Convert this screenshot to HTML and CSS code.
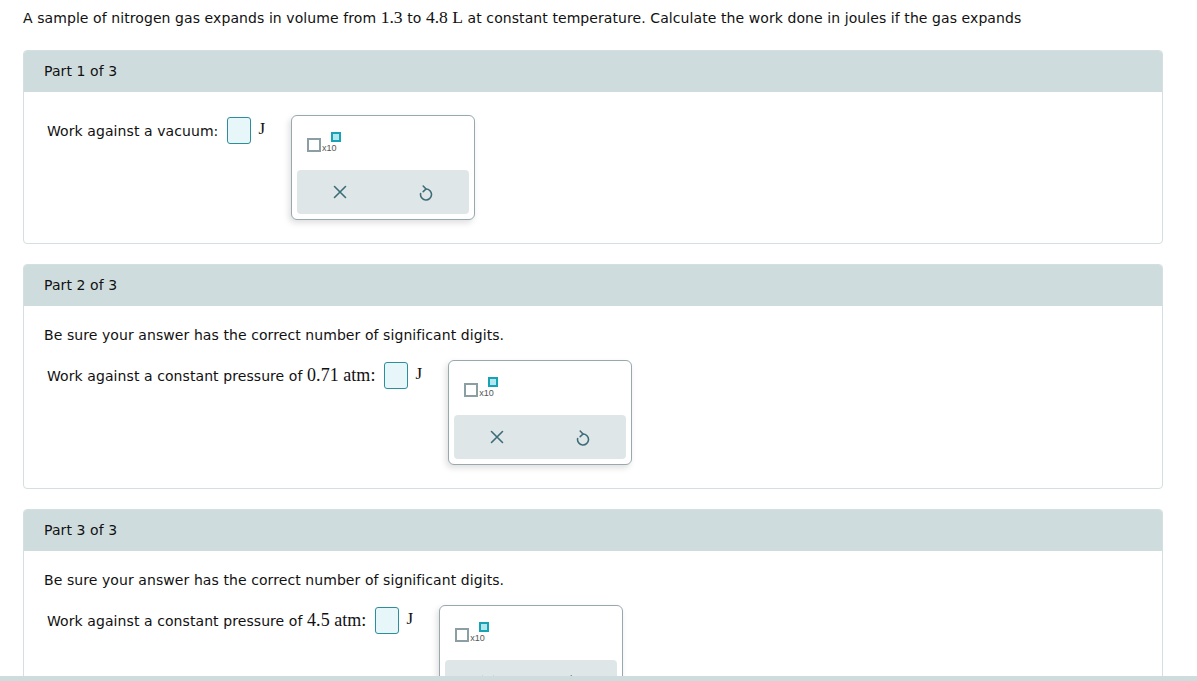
FILE: index.html
```html
<!DOCTYPE html>
<html>
<head>
<meta charset="utf-8">
<link rel="stylesheet" href="styles.css">
</head>
<body>
<div class="page">
  <p class="question">A sample of nitrogen gas expands in volume from <span class="math">1.3</span> to <span class="math">4.8 L</span> at constant temperature. Calculate the work done in joules if the gas expands</p>

  <section class="card">
    <div class="card-head">Part 1 of 3</div>
    <div class="card-body">
      <div class="row">
        <span class="label">Work against a vacuum:</span>
        <span class="answer"></span>
        <span class="unit">J</span>
        <div class="popup">
          <div class="tools">
            <span class="sci"><span class="sci-base"></span><span class="sci-x">x10</span><span class="sci-exp"></span></span>
          </div>
          <div class="actions">
            <svg class="ic-x" viewBox="0 0 14 14" width="14" height="14"><path d="M1.5 1.5 L12.5 12.5 M12.5 1.5 L1.5 12.5" /></svg>
            <svg class="ic-undo" viewBox="0 0 16 17" width="16" height="17"><path d="M8 5 A5.5 5.5 0 1 1 2.6 9.6" /><path d="M5.2 2 L8 5 L5.2 7.6" /></svg>
          </div>
        </div>
      </div>
    </div>
  </section>

  <section class="card">
    <div class="card-head">Part 2 of 3</div>
    <div class="card-body">
      <p class="note">Be sure your answer has the correct number of significant digits.</p>
      <div class="row">
        <span class="label">Work against a constant pressure of <span class="math">0.71 atm:</span></span>
        <span class="answer"></span>
        <span class="unit">J</span>
        <div class="popup">
          <div class="tools">
            <span class="sci"><span class="sci-base"></span><span class="sci-x">x10</span><span class="sci-exp"></span></span>
          </div>
          <div class="actions">
            <svg class="ic-x" viewBox="0 0 14 14" width="14" height="14"><path d="M1.5 1.5 L12.5 12.5 M12.5 1.5 L1.5 12.5" /></svg>
            <svg class="ic-undo" viewBox="0 0 16 17" width="16" height="17"><path d="M8 5 A5.5 5.5 0 1 1 2.6 9.6" /><path d="M5.2 2 L8 5 L5.2 7.6" /></svg>
          </div>
        </div>
      </div>
    </div>
  </section>

  <section class="card">
    <div class="card-head">Part 3 of 3</div>
    <div class="card-body">
      <p class="note">Be sure your answer has the correct number of significant digits.</p>
      <div class="row">
        <span class="label">Work against a constant pressure of <span class="math">4.5 atm:</span></span>
        <span class="answer"></span>
        <span class="unit">J</span>
        <div class="popup">
          <div class="tools">
            <span class="sci"><span class="sci-base"></span><span class="sci-x">x10</span><span class="sci-exp"></span></span>
          </div>
          <div class="actions">
            <svg class="ic-x" viewBox="0 0 14 14" width="14" height="14"><path d="M1.5 1.5 L12.5 12.5 M12.5 1.5 L1.5 12.5" /></svg>
            <svg class="ic-undo" viewBox="0 0 16 17" width="16" height="17"><path d="M8 5 A5.5 5.5 0 1 1 2.6 9.6" /><path d="M5.2 2 L8 5 L5.2 7.6" /></svg>
          </div>
        </div>
      </div>
    </div>
  </section>
</div>
<div class="bottom-bar"></div>
</body>
</html>
```

FILE: styles.css
```css
html, body {
  margin: 0;
  padding: 0;
  background: #ffffff;
}
body {
  font-family: "DejaVu Sans", Verdana, sans-serif;
  font-size: 14px;
  letter-spacing: 0.08px;
  color: #111;
  line-height: 17px;
}
.page {
  padding: 10px 0 0 23px;
  width: 1140px;
}
.question {
  margin: 0 0 23px 0;
  line-height: 17px;
}
.math {
  font-family: "Liberation Serif", "Times New Roman", serif;
  font-size: 18px;
  letter-spacing: 0.05px;
  line-height: 10px;
}
.question .math {
  font-size: 17.6px;
  letter-spacing: 0;
}
.card {
  border: 1px solid #d3dfe0;
  border-radius: 4px;
  margin-bottom: 20px;
  overflow: hidden;
}
.card-head {
  background: #cfdcdd;
  height: 42px;
  margin-top: -1px;
  margin-left: -1px;
  margin-right: -1px;
  padding-left: 21px;
  line-height: 43px;
}
.card-body {
  padding: 22px 20px 23px 20px;
}
.card-body > .row:first-child {
  margin-top: 1px;
}
.note {
  margin: -1px 0 16px 0;
  line-height: 17px;
}
.row {
  display: flex;
  align-items: flex-start;
}
.label {
  margin-left: 3px;
  padding-top: 8px;
  line-height: 17px;
}
.answer {
  box-sizing: border-box;
  width: 24px;
  height: 27px;
  margin-top: 2px;
  margin-left: 9px;
  border: 1px solid #2c8e9c;
  border-radius: 3px;
  background: #e6f6f9;
}
.unit {
  font-family: "Liberation Serif", "Times New Roman", serif;
  font-size: 17px;
  margin-left: 7px;
  padding-top: 5px;
  line-height: 18px;
}
.popup {
  box-sizing: border-box;
  width: 184px;
  height: 105px;
  margin-left: 26px;
  border: 1px solid #97a9ad;
  border-radius: 6px;
  background: #fff;
  box-shadow: -2px 3px 6px rgba(0, 0, 0, 0.13);
  padding: 0 5px 5px 5px;
  display: flex;
  flex-direction: column;
}
.tools {
  flex: 1;
  position: relative;
}
.sci {
  position: absolute;
  left: 10px;
  top: 16px;
  width: 36px;
  height: 22px;
}
.sci-base {
  position: absolute;
  left: 0;
  top: 6px;
  box-sizing: border-box;
  width: 14px;
  height: 14px;
  border: 2px solid #8a9ea3;
  background: #fff;
}
.sci-x {
  position: absolute;
  left: 15px;
  top: 12px;
  font-family: "Liberation Sans", Arial, sans-serif;
  font-size: 9px;
  line-height: 9px;
  letter-spacing: 0;
  color: #555;
}
.sci-exp {
  position: absolute;
  left: 24px;
  top: 0;
  box-sizing: border-box;
  width: 10px;
  height: 10px;
  border: 2px solid #17a2b6;
  background: #b3e7ef;
}
.actions {
  height: 44px;
  background: #dfe6e8;
  border-radius: 4px;
  display: flex;
  align-items: center;
  justify-content: space-between;
  padding: 0 35px 0 36px;
}
.actions svg {
  fill: none;
  stroke: #3c6c78;
  stroke-width: 1.6;
  stroke-linecap: round;
  stroke-linejoin: round;
}
.ic-undo {
  margin-top: 1px;
}
.bottom-bar {
  position: fixed;
  left: 0;
  right: 0;
  bottom: 0;
  height: 5px;
  background: #cfdcdd;
}
```
